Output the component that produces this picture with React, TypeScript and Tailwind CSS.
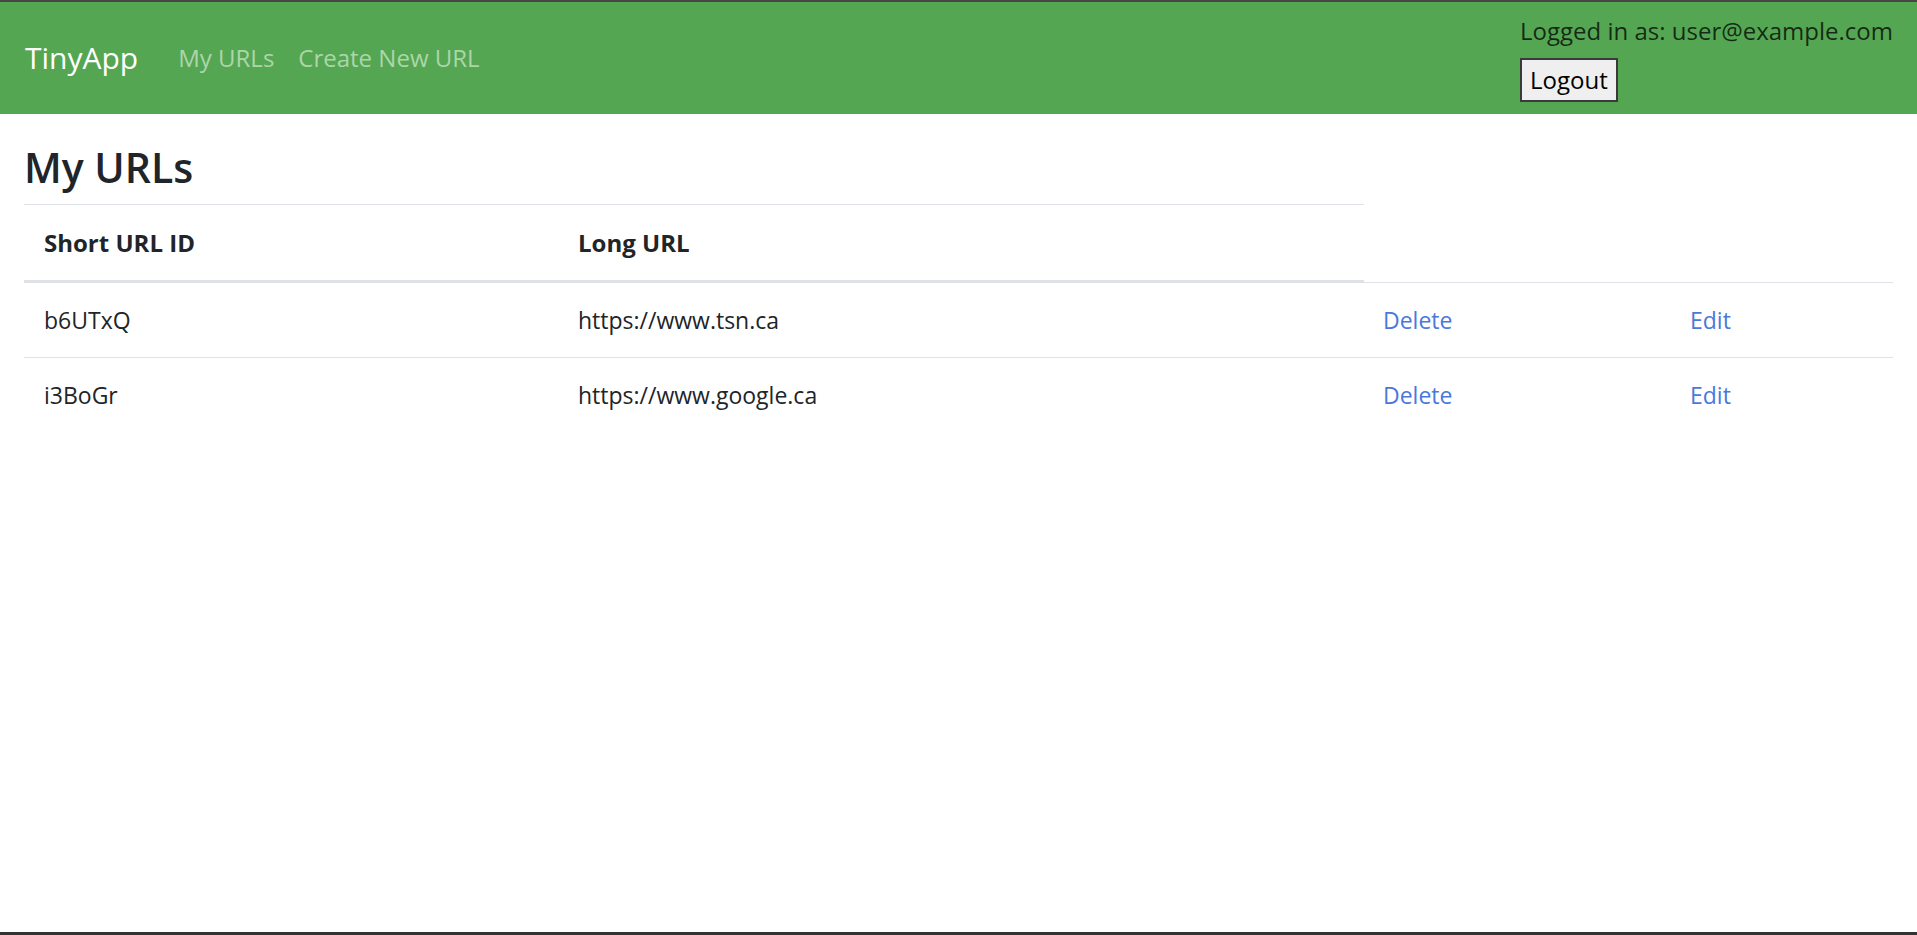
const rows = [
  { id: "b6UTxQ", url: "https://www.tsn.ca" },
  { id: "i3BoGr", url: "https://www.google.ca" },
];

export default function App() {
  return (
    <div
      className="flex h-[935px] flex-col bg-white text-[#212529]"
      style={{ fontFamily: '"Segoe UI", "Open Sans", "Noto Sans", sans-serif' }}
    >
      <div className="h-[2px] bg-[#474747]" />

      <nav className="flex h-[112px] items-center bg-[#54a652] pr-6 pl-[25px]">
        <span className="mr-[28px] text-[30px] leading-none text-white">TinyApp</span>
        <a className="px-3 text-[24px] text-[#acd6aa]">My URLs</a>
        <a className="px-3 text-[24px] text-[#acd6aa]">Create New URL</a>

        <div className="ml-auto flex flex-col items-start self-start pt-[11px]">
          <p className="text-[24px] leading-[36px] text-black/75">Logged in as: user@example.com</p>
          <button className="mt-[9px] h-[44px] border-2 border-[#3a3a3a] bg-[#efefef] px-[8px] text-[24px] leading-none text-black">
            Logout
          </button>
        </div>
      </nav>

      <main className="flex-1 px-6">
        <h1 className="mt-[28px] mb-[12px] text-[41px] font-semibold leading-[50px]">My URLs</h1>

        {/* header only covers the first two columns, rows have four */}
        <div className="grid w-[1340px] grid-cols-[535px_805px] border-t border-b-2 border-[#dee2e6]">
          <div className="flex h-[75px] items-center pl-[20px] text-[24px] font-bold">Short URL ID</div>
          <div className="flex h-[75px] items-center pl-[19px] text-[24px] font-bold">Long URL</div>
        </div>

        {rows.map((r) => (
          <div
            key={r.id}
            className="grid h-[75px] grid-cols-[535px_805px_307px_1fr] items-center border-t border-[#dee2e6] text-[23px]"
          >
            <div className="pl-[20px]">{r.id}</div>
            <div className="pl-[19px]">{r.url}</div>
            <div className="pl-[19px]">
              <a className="text-[#4a78dc]">Delete</a>
            </div>
            <div className="pl-[19px]">
              <a className="text-[#4a78dc]">Edit</a>
            </div>
          </div>
        ))}
      </main>

      <div className="h-[3px] bg-[#333333]" />
    </div>
  );
}
